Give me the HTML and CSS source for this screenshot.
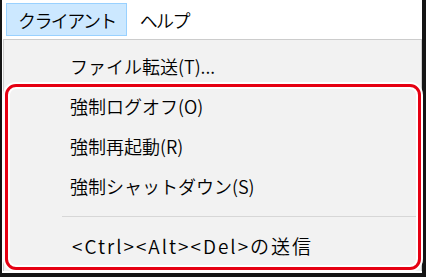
FILE: index.html
```html
<!DOCTYPE html>
<html lang="ja">
<head>
    <meta charset="UTF-8">
    <meta name="viewport" content="width=device-width, initial-scale=1.0">
    <title>クライアント メニュー</title>
    <link rel="stylesheet" href="styles.css">
</head>
<body>
    <div class="window">
        <div class="menubar">
            <div class="menubar-item is-open">クライアント</div>
            <div class="menubar-item">ヘルプ</div>
        </div>

        <div class="dropdown">
            <div class="menu-item">ファイル転送(T)...</div>
            <div class="menu-item">強制ログオフ(O)</div>
            <div class="menu-item">強制再起動(R)</div>
            <div class="menu-item">強制シャットダウン(S)</div>
            <div class="menu-separator"></div>
            <div class="menu-item menu-item-keys">&lt;Ctrl&gt;&lt;Alt&gt;&lt;Del&gt;の送信</div>
        </div>

        <!-- annotation frame -->
        <div class="highlight-box"></div>
    </div>
</body>
</html>
```

FILE: styles.css
```css
html, body {
    margin: 0;
    padding: 0;
}

body {
    width: 426px;
    height: 277px;
    overflow: hidden;
    background: #151515;
    font-family: "Noto Sans CJK JP", "Noto Sans", sans-serif;
    font-size: 18px;
    font-weight: 350;
    color: #000;
}

.window {
    position: relative;
    margin-left: 2px;
    width: 420px;
    height: 273px;
    background: #ffffff;
}

/* Menu bar */
.menubar {
    display: flex;
    align-items: center;
    height: 39px;
    padding-left: 4px;
    background: #ffffff;
}

.menubar-item {
    display: flex;
    align-items: center;
    height: 31px;
    padding: 0 10px 0 12px;
    border: 1px solid transparent;
    line-height: 1;
    letter-spacing: -1.6px;
}

.menubar-item.is-open {
    padding-left: 11px;
    background: #cce8ff;
    border-color: #99d1ff;
}

/* Dropdown */
.dropdown {
    margin-left: 1px;
    width: 417px;
    height: 225px;
    padding-top: 6px;
    background: #f2f2f2;
    border: 1px solid #cccccc;
    border-bottom: none;
}

.menu-item {
    display: flex;
    align-items: center;
    height: 40px;
    padding-left: 66px;
    line-height: 1;
    white-space: nowrap;
}

.menu-item-keys {
    padding-left: 68px;
    font-size: 19px;
    letter-spacing: 2px;
}

.menu-separator {
    height: 1px;
    margin: 10px 5px 8px 58px;
    background: #d7d7d7;
}

/* Red rounded frame around the forced actions */
.highlight-box {
    position: absolute;
    left: 3px;
    top: 84px;
    width: 416px;
    height: 186px;
    box-sizing: border-box;
    border: 3px solid #e60012;
    border-radius: 11px;
    box-shadow: 0 0 0 2px #ffffff, inset 0 0 0 2px #ffffff;
}
```
